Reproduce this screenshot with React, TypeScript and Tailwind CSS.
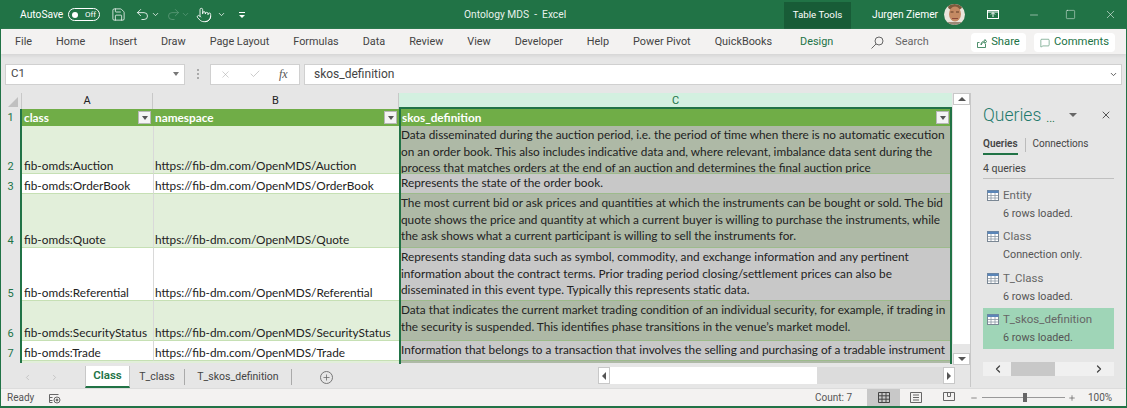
import { ChevronDown, ChevronLeft, ChevronRight, MessageSquare, Minus, Plus, Square, X, Pointer, Save, Undo2, Redo2, Check } from "lucide-react";

const tabs = ["File", "Home", "Insert", "Draw", "Page Layout", "Formulas", "Data", "Review", "View", "Developer", "Help", "Power Pivot", "QuickBooks"];

const rows = [
  {
    n: 2, h: "h-[48px]", a: "fib-omds:Auction", b: "https://fib-dm.com/OpenMDS/Auction", band: true,
    lines: [
      "Data disseminated during the auction period, i.e. the period of time when there is no automatic execution",
      "on an order book. This also includes indicative data and, where relevant, imbalance data sent during the",
      "process that matches orders at the end of an auction and determines the final auction price",
    ],
  },
  { n: 3, h: "h-[20px]", a: "fib-omds:OrderBook", b: "https://fib-dm.com/OpenMDS/OrderBook", band: false, lines: ["Represents the state of the order book."] },
  {
    n: 4, h: "h-[54px]", a: "fib-omds:Quote", b: "https://fib-dm.com/OpenMDS/Quote", band: true,
    lines: [
      "The most current bid or ask prices and quantities at which the instruments can be bought or sold. The bid",
      "quote shows the price and quantity at which a current buyer is willing to purchase the instruments, while",
      "the ask shows what a current participant is willing to sell the instruments for.",
    ],
  },
  {
    n: 5, h: "h-[53px]", a: "fib-omds:Referential", b: "https://fib-dm.com/OpenMDS/Referential", band: false,
    lines: [
      "Represents standing data such as symbol, commodity, and exchange information and any pertinent",
      "information about the contract terms. Prior trading period closing/settlement prices can also be",
      "disseminated in this event type. Typically this represents static data.",
    ],
  },
  {
    n: 6, h: "h-[40px]", a: "fib-omds:SecurityStatus", b: "https://fib-dm.com/OpenMDS/SecurityStatus", band: true,
    lines: [
      "Data that indicates the current market trading condition of an individual security, for example, if trading in",
      "the security is suspended. This identifies phase transitions in the venue\u2019s market model.",
    ],
  },
  { n: 7, h: "h-[20px]", a: "fib-omds:Trade", b: "https://fib-dm.com/OpenMDS/Trade", band: false, lines: ["Information that belongs to a transaction that involves the selling and purchasing of a tradable instrument"] },
];

const queries = [
  { name: "Entity", info: "6 rows loaded." },
  { name: "Class", info: "Connection only." },
  { name: "T_Class", info: "6 rows loaded." },
  { name: "T_skos_definition", info: "6 rows loaded.", active: true },
];

function FilterButton() {
  return (
    <span className="grid h-[13px] w-[13px] shrink-0 place-items-center border border-[#b8b8b8] bg-[#f4f4f4]">
      <span className="h-0 w-0 border-x-[3.5px] border-t-[4px] border-x-transparent border-t-[#555]" />
    </span>
  );
}

function TableIcon() {
  return (
    <svg width="12" height="11" viewBox="0 0 12 11" className="shrink-0">
      <rect x="0.5" y="0.5" width="11" height="10" fill="#fff" stroke="#7a8794" />
      <rect x="0.5" y="0.5" width="11" height="2.5" fill="#5b86b8" />
      <path d="M4 3v7M8 3v7M1 5.5h10M1 8h10" stroke="#8a97a3" strokeWidth="0.8" />
    </svg>
  );
}

function Avatar() {
  return (
    <svg width="21" height="21" viewBox="0 0 21 21" className="shrink-0">
      <clipPath id="face"><circle cx="10.5" cy="10.5" r="10.5" /></clipPath>
      <g clipPath="url(#face)">
        <rect width="21" height="21" fill="#e9e4dc" />
        <ellipse cx="11" cy="3" rx="7" ry="3.5" fill="#7d5a3c" />
        <ellipse cx="11" cy="10" rx="6" ry="7.5" fill="#c48a63" />
        <rect x="6.5" y="7.5" width="3" height="1" fill="#5e3b27" />
        <rect x="12" y="7.5" width="3" height="1" fill="#5e3b27" />
        <rect x="8" y="14" width="6" height="1" fill="#8d4a3a" />
        <rect x="0" y="18" width="21" height="3" fill="#9c8a78" />
      </g>
    </svg>
  );
}

export default function App() {
  return (
    <div className="flex h-[408px] w-[1127px] flex-col overflow-hidden border-x border-b-2 border-[#217346] bg-[#e6e6e6] font-['Roboto','Noto_Sans',sans-serif] text-[#444]">
      {/* title bar */}
      <div className="flex h-[29px] shrink-0 items-center bg-[#217346] text-[10.25px] text-white">
        <span className="ml-[19px] w-[43px] whitespace-nowrap">AutoSave</span>
        <span className="ml-[5px] flex h-[13px] w-[32px] items-center justify-between rounded-full border border-white px-[3px] text-[8px]">
          <span className="h-[6px] w-[6px] rounded-full bg-white" />
          Off
        </span>
        <Save className="ml-[11px] h-[15px] w-[15px]" strokeWidth={1.2} />
        <Undo2 className="ml-[9px] h-[15px] w-[15px]" strokeWidth={1.3} />
        <ChevronDown className="ml-[1px] h-[9px] w-[9px]" />
        <Redo2 className="ml-[6px] h-[15px] w-[15px] text-[#5c9a79]" strokeWidth={1.3} />
        <ChevronDown className="h-[9px] w-[9px] text-[#5c9a79]" />
        <Pointer className="ml-[6px] h-[16px] w-[16px]" strokeWidth={1.3} />
        <ChevronDown className="ml-[5px] h-[9px] w-[9px]" />
        <span className="ml-[12px] flex w-[8px] flex-col items-center gap-[2px]">
          <span className="h-px w-[6px] bg-white" />
          <span className="h-0 w-0 border-x-[3px] border-t-[3px] border-x-transparent border-t-white" />
        </span>
        <span className="ml-[218px] w-[120px] whitespace-nowrap text-[#e8f1ec]">Ontology MDS&nbsp; -&nbsp; Excel</span>
        <span className="ml-[200px] flex h-[27px] w-[67px] items-center justify-center self-end bg-[#185c37] text-[9.75px]">Table Tools</span>
        <span className="ml-[21px] w-[64px] whitespace-nowrap">Jurgen Ziemer</span>
        <span className="ml-[8px]"><Avatar /></span>
        <svg width="12" height="10" viewBox="0 0 12 10" className="ml-[22px]" fill="none" stroke="#fff">
          <rect x="0.5" y="0.5" width="11" height="8" />
          <path d="M6 7V3M4 4.5L6 2.5 8 4.5M1 2h10" />
        </svg>
        <Minus className="ml-[29px] h-[12px] w-[12px]" strokeWidth={1} />
        <Square className="ml-[25px] h-[11px] w-[11px]" strokeWidth={1} />
        <X className="ml-[28px] h-[13px] w-[13px]" strokeWidth={1} />
      </div>

      {/* ribbon tabs */}
      <div className="flex h-[25px] shrink-0 items-center gap-6 bg-[#f3f2f1] pl-[14px] pt-[2px] text-[10.85px] shadow-[0_2px_3px_#d5d5d5]">
        {tabs.map((t) => (
          <span key={t} className="whitespace-nowrap text-[#444]">{t}</span>
        ))}
        <span className="ml-[4px] text-[#217346]">Design</span>
        <svg width="13" height="13" viewBox="0 0 13 13" className="ml-[14px] shrink-0" fill="none" stroke="#666">
          <circle cx="8" cy="5" r="4" />
          <path d="M5 8l-4.5 4.5" />
        </svg>
        <span className="-ml-[13px] text-[#666]">Search</span>
        <div className="ml-auto mr-[11px] flex gap-2 text-[11.25px]">
          <span className="flex h-[19px] w-[55px] items-center justify-center gap-1 rounded-sm bg-white text-[#217346]">
            <svg width="10" height="10" viewBox="0 0 10 10" fill="none" stroke="#217346" strokeWidth="0.8">
              <path d="M.5 4.5v5h8V6M.5 4.5h2M4 7c0-3 2-4 4-4V1.5L9.5 3.5 8 5.5V4.2C6 4.2 5 5 4 7z" />
            </svg>
            Share
          </span>
          <span className="flex h-[19px] w-[81px] items-center justify-center gap-1 rounded-sm bg-white text-[#217346]">
            <MessageSquare className="h-[10px] w-[10px]" strokeWidth={1.2} />
            Comments
          </span>
        </div>
      </div>

      {/* formula bar */}
      <div className="flex h-[39px] shrink-0 items-center px-[4px] pt-[1px] text-[11.5px]">
        <div className="flex h-[21px] w-[180px] items-center justify-between border border-[#d0d0d0] bg-white pl-[5px] pr-[5px] text-[#444]">
          C1
          <span className="h-0 w-0 border-x-[3.5px] border-t-[4px] border-x-transparent border-t-[#777]" />
        </div>
        <span className="ml-[12px] flex w-[2px] flex-col gap-[2px]">
          <span className="h-[2px] w-[2px] bg-[#aaa]" />
          <span className="h-[2px] w-[2px] bg-[#aaa]" />
          <span className="h-[2px] w-[2px] bg-[#aaa]" />
        </span>
        <div className="ml-[11px] flex h-[21px] w-[90px] items-center gap-[18px] border border-[#d0d0d0] bg-white pl-[9px]">
          <X className="h-[11px] w-[11px] text-[#aaa]" strokeWidth={1.2} />
          <Check className="h-[12px] w-[12px] text-[#aaa]" strokeWidth={1.2} />
          <span className="font-['Liberation_Serif',serif] text-[12px] italic text-[#555]">fx</span>
        </div>
        <div className="ml-[4px] flex h-[21px] flex-1 items-center justify-between border border-[#d0d0d0] bg-white pl-[9px] pr-[3px] text-[12px]">
          skos_definition
          <ChevronDown className="h-[9px] w-[9px] text-[#555]" strokeWidth={2.5} />
        </div>
      </div>

      {/* main */}
      <div className="flex min-h-0 flex-1">
        <div className="flex w-[969px] shrink-0 flex-col">
          <div className="flex min-h-0 flex-1">
            {/* sheet */}
            <div className="relative w-[951px] shrink-0 overflow-hidden font-['Lato',sans-serif] text-[11.8px] leading-[16.5px] text-[#222]">
              <div className="flex h-[16px] text-center font-['Roboto',sans-serif] text-[11px] leading-[16px]">
                <div className="relative w-[21px] shrink-0 border-r border-[#c8c8c8]">
                  <span className="absolute bottom-[2px] right-[3px] h-0 w-0 border-b-[10px] border-l-[10px] border-b-[#c0c0c0] border-l-transparent" />
                </div>
                <div className="w-[131px] border-r border-[#c8c8c8]">A</div>
                <div className="w-[246px] border-r border-[#c8c8c8]">B</div>
                <div className="flex-1 border-b-2 border-[#217346] bg-[#d3f0e0] text-[#217346]">C</div>
              </div>
              <div className="flex h-[17px] bg-[#70ad47] font-bold leading-[18px] text-white">
                <div className="w-[21px] shrink-0 border-r-2 border-[#217346] bg-[#e6e6e6] text-center font-['Roboto',sans-serif] text-[11px] font-normal text-[#217346]">1</div>
                <div className="flex w-[131px] items-center justify-between pl-[2px] pr-[2px]">class<FilterButton /></div>
                <div className="flex w-[246px] items-center justify-between pl-[2px] pr-[2px]">namespace<FilterButton /></div>
                <div className="flex flex-1 items-center justify-between pl-[3px] pr-[3px]">skos_definition<FilterButton /></div>
              </div>
              {rows.map((r) => (
                <div key={r.n} className={`flex ${r.h}`}>
                  <div className="flex w-[21px] shrink-0 items-end justify-center border-r-2 border-[#217346] bg-[#e6e6e6] font-['Roboto',sans-serif] text-[11px] leading-[15px] text-[#217346]">{r.n}</div>
                  <div className={`flex w-[131px] items-end whitespace-nowrap border-b border-[#c6e0b4] pl-[2px] leading-[15px] ${r.band ? "bg-[#e2efda]" : "bg-white"}`}>{r.a}</div>
                  <div className={`flex w-[246px] items-end whitespace-nowrap border-b border-l border-[#c6e0b4] border-l-[#d9d9d9] pl-[1px] leading-[15px] ${r.band ? "bg-[#e2efda]" : "bg-white"}`}>{r.b}</div>
                  <div className={`flex-1 overflow-hidden whitespace-nowrap border-b border-[#9dbb8c] pl-[2px] pt-px ${r.band ? "bg-[#aeb9a6]" : "bg-[#c8c8c8]"}`}>
                    {r.lines.map((l) => (
                      <div key={l}>{l}</div>
                    ))}
                  </div>
                </div>
              ))}
              <div className="flex h-[2px]">
                <div className="w-[21px] shrink-0 border-r-2 border-[#217346] bg-[#e6e6e6]" />
                <div className="w-[377px] bg-[#e2efda]" />
                <div className="flex-1 bg-[#aeb9a6]" />
              </div>
              {/* selected column outline */}
              <div className="pointer-events-none absolute bottom-[2px] left-[398px] right-0 top-[15px] border-x-2 border-[#217346]" />
            </div>
            {/* vertical scrollbar */}
            <div className="ml-[1px] flex w-[17px] shrink-0 flex-col pb-[1px]">
              <span className="grid h-[12px] place-items-center border border-[#c8c8c8] bg-white">
                <span className="h-0 w-0 border-x-[4px] border-b-[4px] border-x-transparent border-b-[#555]" />
              </span>
              <div className="flex-1 bg-white" />
              <div className="h-[9px]" />
              <span className="grid h-[12px] place-items-center border border-[#c8c8c8] bg-white">
                <span className="h-0 w-0 border-x-[4px] border-t-[4px] border-x-transparent border-t-[#555]" />
              </span>
            </div>
          </div>
          {/* sheet tabs */}
          <div className="flex h-[22px] shrink-0 items-stretch text-[10.5px]">
            <div className="flex w-[84px] items-center gap-[18px] pl-[22px] text-[#bbb]">
              <ChevronLeft className="h-[9px] w-[9px]" />
              <ChevronRight className="h-[9px] w-[9px]" />
            </div>
            <span className="flex w-[45px] items-center justify-center border-x border-b-2 border-x-[#c8c8c8] border-b-[#217346] bg-white text-[11.5px] font-semibold text-[#217346]">Class</span>
            <span className="my-[3px] flex w-[55px] items-center justify-center border-r border-[#aaa]">T_class</span>
            <span className="my-[3px] flex w-[107px] items-center justify-center border-r border-[#aaa]">T_skos_definition</span>
            <span className="ml-[28px] mt-[5px] grid h-[13px] w-[13px] place-items-center rounded-full border border-[#777]">
              <Plus className="h-[9px] w-[9px] text-[#666]" />
            </span>
            <div className="mb-[4px] ml-auto mr-[15px] mt-[1px] flex w-[357px] items-stretch bg-[#dcdcdc]">
              <span className="grid w-[12px] place-items-center border border-[#c8c8c8] bg-white">
                <span className="h-0 w-0 border-y-[4px] border-r-[4px] border-y-transparent border-r-[#555]" />
              </span>
              <div className="w-[207px] bg-white" />
              <span className="ml-auto grid w-[12px] place-items-center border border-[#c8c8c8] bg-white">
                <span className="h-0 w-0 border-y-[4px] border-l-[4px] border-y-transparent border-l-[#555]" />
              </span>
            </div>
          </div>
        </div>

        {/* queries pane */}
        <div className="mb-[1px] flex flex-1 flex-col border-l border-[#c8c8c8] pl-[12px] pr-[12px] pt-[9px] text-[10.75px]">
          <div className="flex items-center">
            <span className="text-[17.5px] font-light leading-[26px] text-[#1f7a6c]">Queries</span>
            <span className="ml-[5px] mt-[6px] text-[11px] leading-none text-[#217346]">...</span>
            <span className="ml-[14px] h-0 w-0 border-x-[4px] border-t-[4px] border-x-transparent border-t-[#666]" />
            <X className="ml-auto mr-[2px] h-[12px] w-[12px] text-[#555]" strokeWidth={2} />
          </div>
          <div className="mt-[8px] flex items-center text-[10px]">
            <span className="relative pb-[3px] font-semibold text-[#444] after:absolute after:-bottom-[1px] after:left-0 after:h-[2px] after:w-full after:bg-[#217346]">Queries</span>
            <span className="mx-[7px] h-[14px] w-px bg-[#bbb]" />
            <span className="pb-[3px]">Connections</span>
          </div>
          <div className="mt-[7px] border-b border-[#c0c0c0] pb-[1px] text-[10.5px]">4 queries</div>
          <div className="mt-[5px] flex flex-col gap-[0.5px]">
            {queries.map((q) => (
              <div key={q.name} className={`h-[41px] pl-[4px] pt-[2px] ${q.active ? "bg-[#9fd5b7]" : ""}`}>
                <div className="flex items-center gap-[4px] text-[11.5px] leading-[19px] text-[#666]"><TableIcon />{q.name}</div>
                <div className="pl-[16px] leading-[18px] text-[#555]">{q.info}</div>
              </div>
            ))}
          </div>
          <div className="mt-[13px] flex h-[14px] items-center bg-[#f0f0f0] text-[#444]">
            <ChevronLeft className="ml-[9px] h-[12px] w-[12px]" strokeWidth={2.5} />
            <span className="ml-[7px] h-full w-[44px] bg-[#c8c8c8]" />
            <ChevronRight className="ml-auto mr-[9px] h-[12px] w-[12px]" strokeWidth={2.5} />
          </div>
        </div>
      </div>

      {/* status bar */}
      <div className="flex h-[18px] shrink-0 items-center border-t border-[#dcdcdc] bg-[#f3f2f1] text-[10px] text-[#555]">
        <span className="ml-[6px] w-[26px]">Ready</span>
        <svg width="12" height="12" viewBox="0 0 12 12" className="ml-[16px]" fill="none" stroke="#666">
          <path d="M.5 2.5h9M.5 5.5h3M.5 8.5h3M.5 2.5v8h3" />
          <circle cx="8" cy="8" r="3" />
          <circle cx="8" cy="8" r="1" fill="#666" />
        </svg>
        <span className="ml-[754px] w-[40px] whitespace-nowrap">Count: 7</span>
        <span className="ml-[12px] grid h-full w-[33px] place-items-center bg-[#c8c8c8]">
          <svg width="12" height="11" viewBox="0 0 12 11" fill="none" stroke="#444"><path d="M.5.5h11v10H.5zM4 .5v10M8 .5v10M.5 3.8h11M.5 7.2h11" /></svg>
        </span>
        <svg width="12" height="11" viewBox="0 0 12 11" className="ml-[10px]" fill="none" stroke="#666"><path d="M.5.5h11v10H.5zM3 3h6M3 5.5h6M3 8h6" /></svg>
        <svg width="12" height="11" viewBox="0 0 12 11" className="ml-[21px]" fill="none" stroke="#666"><path d="M.5.5h11v8H.5zM4.5.5v4h3v-4" /></svg>
        <Minus className="ml-[15px] h-[8px] w-[8px]" />
        <span className="relative ml-[4px] h-px w-[83px] bg-[#999]">
          <span className="absolute -top-[4px] left-[41px] h-[9px] w-[4px] bg-[#666]" />
        </span>
        <Plus className="ml-[3px] h-[8px] w-[8px]" />
        <span className="ml-[12px]">100%</span>
      </div>
    </div>
  );
}
